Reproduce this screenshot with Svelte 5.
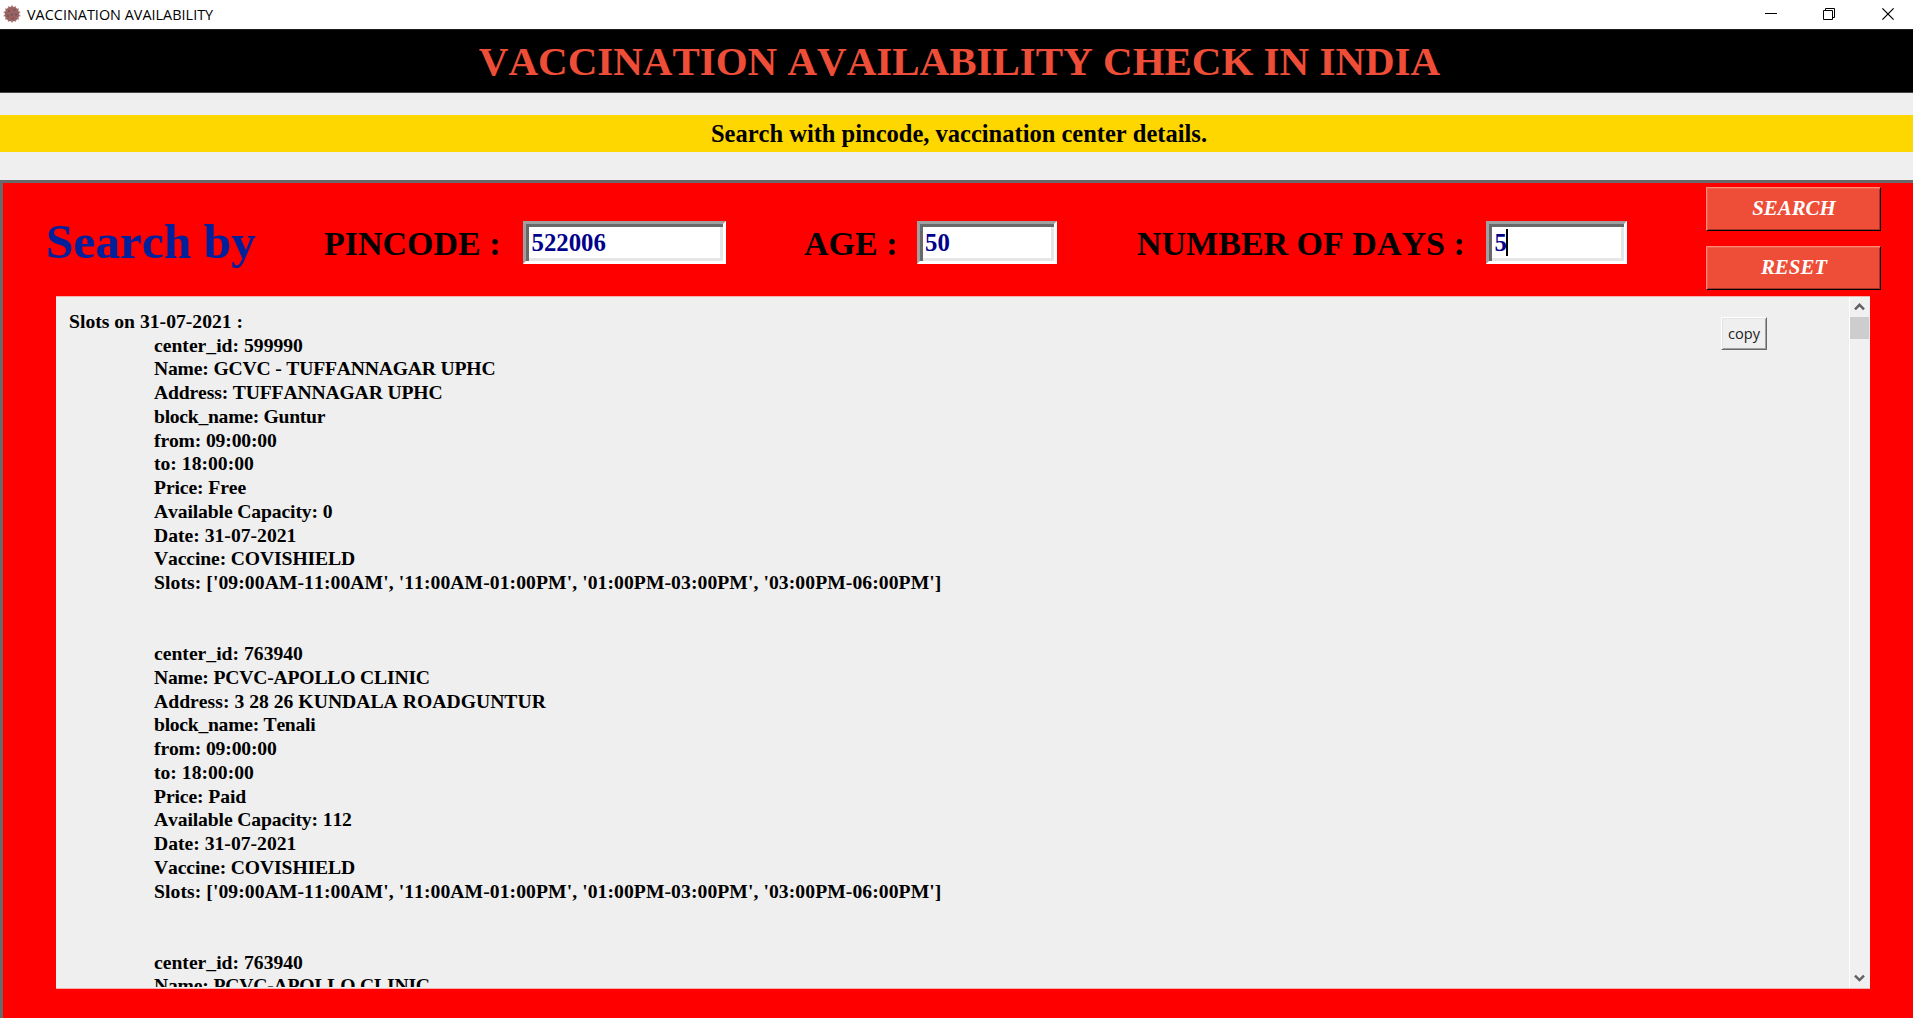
<script>
  const timing = "['09:00AM-11:00AM', '11:00AM-01:00PM', '01:00PM-03:00PM', '03:00PM-06:00PM']";

  // each entry is [field, printed line]; the field picks the letter tracking
  function describe(c) {
    return [
      ['id', `center_id: ${c.id}`],
      ['name', `Name: ${c.name}`],
      [/\d/.test(c.address) ? 'street' : 'address', `Address: ${c.address}`],
      ['block', `block_name: ${c.block}`],
      ['from', 'from: 09:00:00'],
      ['to', 'to: 18:00:00'],
      ['price', `Price: ${c.price}`],
      ['capacity', `Available Capacity: ${c.capacity}`],
      ['date', 'Date: 31-07-2021'],
      ['vaccine', 'Vaccine: COVISHIELD'],
      ['slots', `Slots: ${timing}`],
    ];
  }

  const apollo = {
    id: 763940,
    name: 'PCVC-APOLLO CLINIC',
    address: '3 28 26 KUNDALA ROADGUNTUR',
    block: 'Tenali',
    price: 'Paid',
    capacity: 112,
  };
  const guntur = {
    id: 599990,
    name: 'GCVC - TUFFANNAGAR UPHC',
    address: 'TUFFANNAGAR UPHC',
    block: 'Guntur',
    price: 'Free',
    capacity: 0,
  };
  // the last record scrolls out of the panel after its second line
  const records = [describe(guntur), describe(apollo), describe(apollo).slice(0, 2)];

  // spikes around the edge of the window icon
  const spikes = Array.from({ length: 14 }, (_, i) => (i * 360) / 14);
</script>

<div class="window">
  <header class="titlebar">
    <svg class="logo" width="18" height="18" viewBox="0 0 18 18">
      {#each spikes as a}
        <path d="M9 4V.9M8.2 1h1.6" stroke="#b87f7d" stroke-width="1" transform="rotate({a} 9 9)" />
      {/each}
      <circle cx="9" cy="9" r="7.4" fill="#966665" />
      <g fill="#6f5455">
        <circle cx="6" cy="6" r="1.1" /><circle cx="11.5" cy="5" r="1" /><circle cx="9" cy="9.6" r="1.2" />
        <circle cx="13" cy="9.6" r="1.1" /><circle cx="5" cy="11" r="1.1" /><circle cx="10" cy="13.5" r="1" />
      </g>
      <g fill="#bd4d4b">
        <circle cx="8.6" cy="4.6" r=".9" /><circle cx="4.2" cy="8.2" r=".8" /><circle cx="10.8" cy="7.6" r=".8" />
        <circle cx="7.2" cy="12.6" r=".9" /><circle cx="12.4" cy="12.4" r=".9" />
      </g>
    </svg>
    <span class="caption">VACCINATION AVAILABILITY</span>
    <svg class="controls" width="130" height="12" viewBox="0 0 130 12" fill="none" stroke="#000" stroke-width="1">
      <path d="M0 5.5H12" />
      <path d="M58.5 2.5h9v9h-9zM60.5 2.5v-2h9v9h-2" />
      <path d="M117.4 .4L128.6 11.6M128.6 .4L117.4 11.6" stroke-width="1.2" />
    </svg>
  </header>

  <h1>VACCINATION AVAILABILITY CHECK IN INDIA</h1>
  <p class="tagline">Search with pincode, vaccination center details.</p>

  <main>
    <section class="search">
      <h2>Search by</h2>
      <span class="label">PINCODE :</span>
      <div class="entry pincode">522006</div>
      <span class="label">AGE :</span>
      <div class="entry">50</div>
      <span class="label">NUMBER OF DAYS :</span>
      <div class="entry">5<i class="caret"></i></div>
      <div class="actions">
        <button>SEARCH</button>
        <button>RESET</button>
      </div>
    </section>

    <section class="results">
      <div class="text">
        <div>Slots on 31-07-2021 :</div>
        {#each records as record}
          <div class="center">
            {#each record as [field, line]}
              <div class={field}>{line}</div>
            {/each}
          </div>
        {/each}
      </div>
      <button class="copy">copy</button>
      <div class="scrollbar">
        <svg width="19" height="20" viewBox="0 0 19 20"><path d="M5 12.3L9.5 7.8L14 12.3" /></svg>
        <div class="thumb"></div>
        <svg width="19" height="20" viewBox="0 0 19 20"><path d="M5 7.6L9.5 12.1L14 7.6" /></svg>
      </div>
    </section>
  </main>
</div>

<style>
  :global(body) {
    overflow: hidden;
  }
  .window {
    display: flex;
    flex-direction: column;
    width: 1913px;
    height: 1018px;
    overflow: hidden;
    background: #efefef;
    font-family: 'Liberation Serif', 'Times New Roman', serif;
    font-weight: bold;
    font-kerning: none;
    color: #000;
    white-space: nowrap;
  }
  .titlebar {
    display: flex;
    flex: 0 0 29px;
    align-items: flex-start;
    background: #fff;
  }
  .logo {
    margin: 5px 0 0 3px;
    fill: none;
  }
  .caption {
    margin-left: 6px;
    font: 14.4px/29px 'Open Sans', 'Segoe UI', sans-serif;
    font-kerning: auto;
    letter-spacing: 0.02px;
  }
  .controls {
    margin: 8px 18px 0 auto;
  }
  h1 {
    flex: 0 0 64px;
    box-sizing: border-box;
    min-height: 0;
    margin: 0;
    padding-left: 6px;
    border-top: 1px solid #1c1c1c;
    border-bottom: 1px solid #444;
    background: #000;
    color: #ee4e38;
    font-size: 41px;
    line-height: 62px;
    text-align: center;
  }
  .tagline {
    flex: 0 0 37px;
    box-sizing: border-box;
    margin: 22px 0 28px;
    padding: 1px 0 0 5px;
    background: #ffd700;
    font-size: 24.5px;
    line-height: 36px;
    text-align: center;
  }
  main {
    flex: 1;
    border-top: 3px solid #696969;
    border-left: 3px solid #696969;
    background: #f00;
  }
  .search {
    display: grid;
    grid-template-columns: 278px 200px 280px 113.5px 219.5px 350px 219.5px 175px;
    align-items: start;
    height: 113px;
    padding-left: 42px;
  }
  h2 {
    margin: 29px 0 0 1px;
    color: #00209c;
    font-size: 49.4px;
    line-height: 60px;
  }
  .label {
    margin: 41px 0 0 1px;
    font-size: 34px;
    line-height: 40px;
  }
  .entry {
    display: flex;
    box-sizing: border-box;
    width: 140.5px;
    height: 43px;
    margin-top: 38px;
    padding-left: 5.5px;
    border: 3px solid;
    border-color: #a0a0a0 #fff #fff #a0a0a0;
    background: #fff;
    box-shadow: inset 3px 3px #696969, inset -3px -3px #e6e6e6;
    color: #00008b;
    font-size: 24.8px;
    line-height: 37px;
  }
  .pincode {
    width: 203px;
  }
  .caret {
    width: 2px;
    height: 27px;
    margin: 5px 0 0 -1px;
    background: #000;
  }
  .actions {
    display: flex;
    flex-direction: column;
    gap: 15px;
    margin-top: 4px;
  }
  .actions button {
    box-sizing: border-box;
    height: 44px;
    padding: 0 0 2px 2px;
    border: 1px solid;
    border-color: #ff8a78 #000 #000 #ff8a78;
    background: #ee4e38;
    box-shadow: inset 1px 1px #f2604c, inset -1px -1px #a63627;
    color: #fff;
    font: italic bold 20.9px/38px 'Liberation Serif', serif;
    font-kerning: none;
  }
  .results {
    display: flex;
    box-sizing: border-box;
    width: 1814px;
    height: 693px;
    margin-left: 53px;
    border: 1px solid #f5b0b0;
    border-width: 1px 0;
    background: #efefef;
  }
  .text {
    flex: 1;
    box-sizing: border-box;
    height: 690px;
    padding: 12.9px 0 0 13px;
    overflow: hidden;
    font-size: 19.65px;
    line-height: 23.73px;
  }
  .center {
    margin-bottom: 47.46px;
    padding-left: 85px;
  }
  .name {
    letter-spacing: -0.19px;
  }
  .address,
  .from {
    letter-spacing: -0.16px;
  }
  .street {
    letter-spacing: 0.02px;
  }
  .block {
    letter-spacing: -0.28px;
  }
  .price {
    letter-spacing: -0.1px;
  }
  .capacity,
  .vaccine {
    letter-spacing: -0.13px;
  }
  .slots {
    letter-spacing: 0.07px;
  }
  .copy {
    box-sizing: border-box;
    width: 46px;
    height: 33px;
    margin: 20px 82px 0 0;
    padding: 0 0 1px;
    border: 1px solid;
    border-color: #fff #696969 #696969 #fff;
    background: #efefef;
    box-shadow: inset 1px 1px #e3e3e3, inset -1px -1px #a0a0a0;
    color: #222;
    font: 14.6px/28px 'Open Sans', 'Segoe UI', sans-serif;
  }
  .scrollbar {
    display: flex;
    flex-direction: column;
    width: 19px;
    padding-right: 1px;
    border-left: 1px solid #fff;
    background: #f0f0f0;
  }
  .scrollbar svg {
    fill: none;
    stroke: #606060;
    stroke-width: 2.4;
  }
  .thumb {
    height: 22px;
    margin-bottom: auto;
    background: #cdcdcd;
  }
</style>
